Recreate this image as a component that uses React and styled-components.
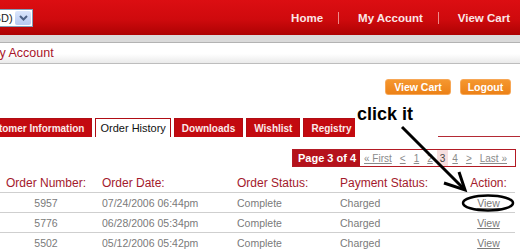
import React from 'react';
import styled, { createGlobalStyle } from 'styled-components';

const GlobalStyle = createGlobalStyle`
  body {
    margin: 0;
    background: #fff;
    overflow: hidden;
    font-family: "Liberation Sans", Arial, sans-serif;
  }
`;

const Page = styled.div`
  position: relative;
  width: 520px;
  height: 251px;
  overflow: hidden;
`;

const Header = styled.header`
  height: 35px;
  display: flex;
  align-items: center;
  justify-content: space-between;
  padding-right: 10px;
  background: linear-gradient(#dc0e12, #cf0a0d 55%, #ad0203);
`;

const CurrencySelect = styled.div`
  margin-left: -22px;
  width: 55px;
  height: 18px;
  box-sizing: border-box;
  display: flex;
  align-items: center;
  background: #fff;
  border: 1px solid #7f9db9;

  span {
    flex: 1;
    padding-left: 3px;
    font-size: 11px;
    color: #222;
  }
`;

const DropButton = styled.div`
  width: 16px;
  height: 14px;
  margin-right: 1px;
  display: flex;
  align-items: center;
  justify-content: center;
  border-radius: 2px;
  background: linear-gradient(#dbe6fb, #b6c9f2);
`;

const Nav = styled.nav`
  display: flex;
  align-items: center;
`;

const NavLink = styled.a`
  font-size: 11.5px;
  font-weight: bold;
  color: #fbe6e6;
  padding: 0 15px 0 19px;
  line-height: 12px;
  border-left: ${p => (p.first ? 'none' : '1px solid #ee8a8a')};

  &:last-child {
    padding-right: 0;
  }
`;

const GreyBand = styled.div`
  height: 7px;
  background: #dadada;
  border-bottom: 1px solid #b3b3b3;
`;

const TitleBar = styled.div`
  height: 20px;
  display: flex;
  align-items: center;
  background: linear-gradient(#fff 55%, #eaeaea);
  border-bottom: 1px solid #bdbdbd;

  h1 {
    margin: 0 0 0 -11px;
    font-size: 12.5px;
    font-weight: normal;
    color: #a8152a;
  }
`;

const ButtonRow = styled.div`
  margin-top: 15px;
  display: flex;
  justify-content: flex-end;
  gap: 9px;
  padding-right: 9px;
`;

const OrangeButton = styled.button`
  height: 16px;
  width: ${p => p.w}px;
  padding: 0;
  border: 1px solid #f7a756;
  border-radius: 3px;
  background: linear-gradient(#f5972f, #ec8117);
  color: #fff;
  font-family: "Liberation Sans", Arial, sans-serif;
  font-size: 10.5px;
  font-weight: bold;
`;

const TabRow = styled.div`
  margin-top: 23px;
  margin-left: -28px;
  display: flex;
  gap: 3px;
  height: 19px;
`;

const Tab = styled.div`
  height: 19px;
  box-sizing: border-box;
  display: flex;
  align-items: center;
  font-size: ${p => (p.active ? '11px' : '10px')};
  font-weight: ${p => (p.active ? 'normal' : 'bold')};
  color: ${p => (p.active ? '#111' : '#fbeaea')};
  background: ${p => (p.active ? '#fff' : '#c30a10')};
  border: 1px solid #b00d15;
  border-bottom: none;
  padding: ${p => (p.active ? '0 4px' : '0 7px')};
`;

const TabFiller = styled.div`
  flex: 1;
  border-bottom: 1px solid #b42a35;
`;

const PagerRow = styled.div`
  margin-top: 12px;
  display: flex;
  justify-content: flex-end;
  padding-right: 4px;
`;

const Pager = styled.div`
  height: 18px;
  box-sizing: border-box;
  display: flex;
  align-items: stretch;
  border: 1px solid #b31a24;
  padding-right: 4px;
`;

const PageLabel = styled.div`
  display: flex;
  align-items: center;
  padding: 0 4px 0 5px;
  background: #b5121b;
  color: #fff;
  font-size: 11px;
  font-weight: bold;
`;

const PageLink = styled.a`
  display: flex;
  align-items: center;
  padding: 0 ${p => p.pad || 4}px;
  font-size: 10px;
  color: ${p => (p.current ? '#444' : '#8a8a8a')};
  text-decoration: ${p => (p.current ? 'none' : 'underline')};
  background: ${p => (p.current ? '#f6dfdf' : 'transparent')};
`;

const Table = styled.div`
  margin-top: 7px;
  width: 515px;
`;

const Row = styled.div`
  display: grid;
  grid-template-columns: 92px 135px 103px 110px 75px;
  height: ${p => (p.head ? 18 : 19)}px;
  align-items: center;
  border-bottom: 1px solid #cfcfcf;
  font-size: ${p => (p.head ? '12px' : '10.5px')};
  color: ${p => (p.head ? '#a31a2c' : '#7a7a7a')};
`;

const Cell = styled.div`
  padding-left: ${p => (p.center ? 0 : 10)}px;
  text-align: ${p => (p.center ? 'center' : 'left')};
`;

const ActionCell = styled.div`
  padding-left: 22px;
  text-align: center;

  a {
    color: #7a7a7a;
    text-decoration: underline;
  }
`;

const Callout = styled.div`
  position: absolute;
  left: 355px;
  top: 100px;
  width: 83px;
  height: 39px;
  background: #fff;
  padding: 4px 0 0 2px;
  box-sizing: border-box;
  font-size: 18px;
  font-weight: bold;
  color: #000;
`;

const Overlay = styled.svg`
  position: absolute;
  left: 0;
  top: 0;
  pointer-events: none;
`;

const orders = [
  { num: '5957', date: '07/24/2006 06:44pm' },
  { num: '5776', date: '06/28/2006 05:34pm' },
  { num: '5502', date: '05/12/2006 05:42pm' }
];

const tabs = ['Customer Information', 'Order History', 'Downloads', 'Wishlist', 'Registry'];

export default function App() {
  return (
    <Page>
      <GlobalStyle />
      <Header>
        <CurrencySelect>
          <span>(USD)</span>
          <DropButton>
            <svg width="9" height="6" viewBox="0 0 9 6">
              <path d="M1 1l3.5 3.5L8 1" stroke="#4d6185" strokeWidth="2" fill="none" />
            </svg>
          </DropButton>
        </CurrencySelect>
        <Nav>
          <NavLink first>Home</NavLink>
          <NavLink>My Account</NavLink>
          <NavLink>View Cart</NavLink>
        </Nav>
      </Header>
      <GreyBand />
      <TitleBar>
        <h1>My Account</h1>
      </TitleBar>

      <ButtonRow>
        <OrangeButton w={66}>View Cart</OrangeButton>
        <OrangeButton w={51}>Logout</OrangeButton>
      </ButtonRow>

      <TabRow>
        {tabs.map(t => (
          <Tab key={t} active={t === 'Order History'}>{t}</Tab>
        ))}
        <TabFiller />
      </TabRow>

      <PagerRow>
        <Pager>
          <PageLabel>Page 3 of 4</PageLabel>
          <PageLink>« First</PageLink>
          <PageLink>&lt;</PageLink>
          <PageLink>1</PageLink>
          <PageLink>2</PageLink>
          <PageLink current pad={3}>3</PageLink>
          <PageLink>4</PageLink>
          <PageLink>&gt;</PageLink>
          <PageLink>Last »</PageLink>
        </Pager>
      </PagerRow>

      <Table>
        <Row head>
          <Cell center>Order Number:</Cell>
          <Cell>Order Date:</Cell>
          <Cell>Order Status:</Cell>
          <Cell>Payment Status:</Cell>
          <ActionCell>Action:</ActionCell>
        </Row>
        {orders.map(o => (
          <Row key={o.num}>
            <Cell center>{o.num}</Cell>
            <Cell>{o.date}</Cell>
            <Cell>Complete</Cell>
            <Cell>Charged</Cell>
            <ActionCell><a>View</a></ActionCell>
          </Row>
        ))}
      </Table>

      <Callout>click it</Callout>
      <Overlay width="520" height="251">
        <line x1="402" y1="127" x2="463" y2="188" stroke="#000" strokeWidth="3" />
        <polyline points="444,183 465,190 459,172" stroke="#000" strokeWidth="3" fill="none" />
        <ellipse cx="488" cy="203" rx="25" ry="7.5" stroke="#000" strokeWidth="2.5" fill="none" />
      </Overlay>
    </Page>
  );
}
